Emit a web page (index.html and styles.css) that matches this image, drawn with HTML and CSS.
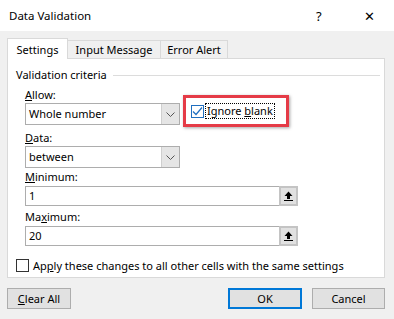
FILE: index.html
```html
<!DOCTYPE html>
<html lang="en">
<head>
    <meta charset="UTF-8">
    <title>Data Validation</title>
    <link rel="stylesheet" href="styles.css">
</head>
<body>
    <div class="dialog">
        <div class="titlebar">
            <span class="title">Data Validation</span>
            <span class="help">?</span>
            <span class="close">&#x2715;</span>
        </div>

        <div class="content">
            <div class="tabs">
                <div class="tab active">Settings</div>
                <div class="tab">Input Message</div>
                <div class="tab">Error Alert</div>
            </div>

            <div class="panel">
                <div class="group-title">
                    <span>Validation criteria</span>
                    <span class="group-line"></span>
                </div>

                <div class="fields">
                    <div class="allow-row">
                        <div class="field">
                            <div class="label"><u>A</u>llow:</div>
                            <div class="combo">
                                <span class="combo-value">Whole number</span>
                                <span class="combo-btn">
                                    <svg width="9" height="5" viewBox="0 0 9 5"><path d="M0.5 0.5 L4.5 4.5 L8.5 0.5" fill="none" stroke="#555" stroke-width="1"/></svg>
                                </span>
                            </div>
                        </div>
                        <div class="highlight">
                            <span class="checkbox checked">
                                <svg width="11" height="11" viewBox="0 0 11 11"><path d="M1 5.5 L4 8.5 L10 1.5" fill="none" stroke="#1f6fc0" stroke-width="1.2"/></svg>
                            </span>
                            <span class="focus-text">Ignore <u>b</u>lank</span>
                        </div>
                    </div>

                    <div class="field data-field">
                        <div class="label"><u>D</u>ata:</div>
                        <div class="combo">
                            <span class="combo-value">between</span>
                            <span class="combo-btn">
                                <svg width="9" height="5" viewBox="0 0 9 5"><path d="M0.5 0.5 L4.5 4.5 L8.5 0.5" fill="none" stroke="#555" stroke-width="1"/></svg>
                            </span>
                        </div>
                    </div>

                    <div class="field min-field">
                        <div class="label"><u>M</u>inimum:</div>
                        <div class="input">
                            <span class="input-value">1</span>
                            <span class="ref-btn">
                                <svg width="9" height="10" viewBox="0 0 9 10"><path d="M4.5 0.5 L8.5 5 L6 5 L6 8 L3 8 L3 5 L0.5 5 Z" fill="#000"/><rect x="0" y="9" width="9" height="1.2" fill="#000"/></svg>
                            </span>
                        </div>
                    </div>

                    <div class="field max-field">
                        <div class="label">Ma<u>x</u>imum:</div>
                        <div class="input">
                            <span class="input-value">20</span>
                            <span class="ref-btn">
                                <svg width="9" height="10" viewBox="0 0 9 10"><path d="M4.5 0.5 L8.5 5 L6 5 L6 8 L3 8 L3 5 L0.5 5 Z" fill="#000"/><rect x="0" y="9" width="9" height="1.2" fill="#000"/></svg>
                            </span>
                        </div>
                    </div>
                </div>

                <div class="apply-row">
                    <span class="checkbox"></span>
                    <span>Ap<u>p</u>ly these changes to all other cells with the same settings</span>
                </div>
            </div>

            <div class="buttons">
                <button class="btn clear"><u>C</u>lear All</button>
                <div class="spacer"></div>
                <button class="btn ok">OK</button>
                <button class="btn cancel">Cancel</button>
            </div>
        </div>
    </div>
</body>
</html>
```

FILE: styles.css
```css
body {
    margin: 0;
    background: #f0f0f0;
    font-family: "Noto Sans", "Open Sans", sans-serif;
    font-size: 11px;
    color: #000;
}

.dialog {
    width: 394px;
    height: 319px;
    overflow: hidden;
}

.titlebar {
    height: 31px;
    background: #fff;
    display: flex;
    align-items: center;
    padding-left: 9px;
}

.title {
    flex: 1;
    font-size: 11.5px;
}

.help {
    width: 10px;
    margin-right: 38px;
    font-size: 13px;
}

.close {
    width: 12px;
    margin-right: 18px;
    font-size: 13px;
}

.content {
    padding: 7px 9px 0 7px;
}

.tabs {
    display: flex;
    align-items: flex-start;
    height: 20px;
}

.tab {
    box-sizing: border-box;
    height: 18px;
    margin-top: 2px;
    border: 1px solid #d9d9d9;
    border-bottom: none;
    border-left: none;
    background: #f0f0f0;
    line-height: 18px;
    white-space: nowrap;
    width: 93px;
    text-align: center;
}

.tab.active {
    position: relative;
    z-index: 1;
    width: 61px;
    height: 21px;
    margin-top: 0;
    border-left: 1px solid #d9d9d9;
    background: #fff;
    line-height: 22px;
}

.tab:last-child {
    width: 67px;
}

.panel {
    box-sizing: border-box;
    height: 220px;
    background: #fff;
    border: 1px solid #d9d9d9;
    padding: 8px 4px 0 8px;
}

.group-title {
    display: flex;
    align-items: center;
    height: 16px;
    line-height: 16px;
}

.group-line {
    flex: 1;
    height: 1px;
    background: #dcdcdc;
    margin-left: 6px;
}

.fields {
    padding-left: 9px;
}

.allow-row {
    display: flex;
    align-items: flex-start;
    margin-top: 4px;
}

.label {
    height: 16px;
    line-height: 16px;
}

.combo {
    box-sizing: border-box;
    width: 155px;
    height: 22px;
    border: 1px solid #adadad;
    display: flex;
    background: #fff;
}

.combo-value {
    flex: 1;
    line-height: 20px;
    padding-left: 3px;
}

.combo-btn {
    width: 17px;
    background: #e5e5e5;
    border-left: 1px solid #cfcfcf;
    display: flex;
    align-items: center;
    justify-content: center;
}

.highlight {
    box-sizing: border-box;
    width: 106px;
    height: 32px;
    margin-top: 8px;
    margin-left: 3px;
    border: 3px solid #e53b47;
    box-shadow: 1px 1px 3px rgba(0, 0, 0, 0.35);
    display: flex;
    align-items: center;
    padding-left: 5px;
}

.checkbox {
    box-sizing: border-box;
    width: 13px;
    height: 13px;
    border: 1px solid #333;
    background: #fff;
    display: flex;
    align-items: center;
    justify-content: center;
}

.checkbox.checked {
    border-color: #1f6fc0;
}

.focus-text {
    margin-left: 1px;
    padding: 0 1px;
    line-height: 14px;
    border: 1px dotted #000;
}

.data-field {
    margin-top: 3px;
}

.min-field {
    margin-top: 1px;
}

.max-field {
    margin-top: 3px;
}

.input {
    box-sizing: border-box;
    width: 273px;
    height: 20px;
    margin-top: 1px;
    border: 1px solid #adadad;
    display: flex;
}

.input-value {
    flex: 1;
    line-height: 18px;
    padding-left: 3px;
}

.ref-btn {
    box-sizing: border-box;
    width: 19px;
    margin: -1px -1px -1px 0;
    background: #e1e1e1;
    border: 2px solid #c4c4c4;
    display: flex;
    align-items: center;
    justify-content: center;
}

.apply-row {
    display: flex;
    align-items: center;
    margin-top: 11px;
    height: 16px;
}

.apply-row .checkbox {
    margin-right: 4px;
}

.buttons {
    display: flex;
    margin-top: 10px;
}

.spacer {
    flex: 1;
}

.btn {
    box-sizing: border-box;
    height: 21px;
    background: #e1e1e1;
    border: 1px solid #adadad;
    font-family: inherit;
    font-size: 11px;
    padding: 0;
}

.clear {
    width: 64px;
}

.ok {
    width: 74px;
    border: 2px solid #0078d7;
    margin-right: 10px;
}

.cancel {
    width: 73px;
}
```
